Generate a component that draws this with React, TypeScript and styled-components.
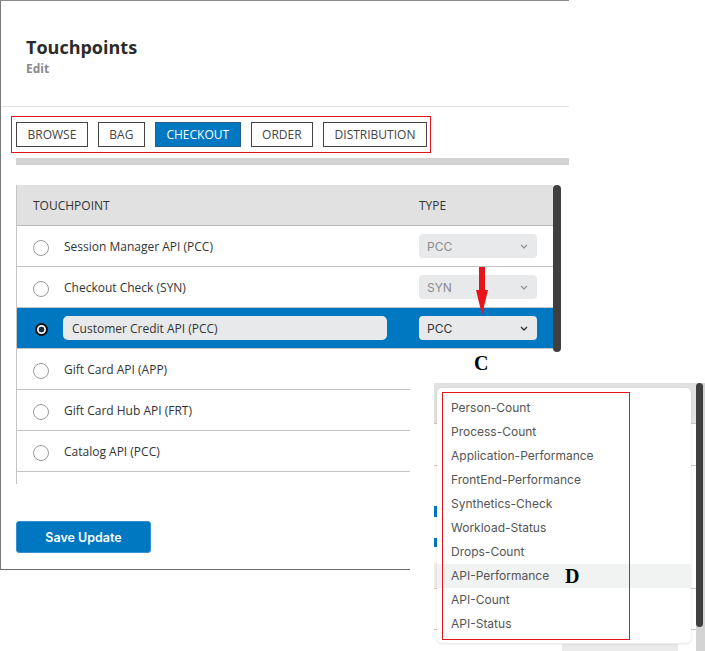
import React from 'react';
import styled, { createGlobalStyle } from 'styled-components';

const GlobalStyle = createGlobalStyle`
  html, body { margin: 0; padding: 0; background: #fff; }
  body { font-family: "Open Sans", "Liberation Sans", sans-serif; }
  * { box-sizing: border-box; }
`;

const Stage = styled.div`
  position: relative;
  width: 705px;
  height: 651px;
  overflow: hidden;
  background: #fff;
`;

const Modal = styled.section`
  width: 569px;
  display: flex;
  flex-direction: column;
  border-top: 1px solid #8c8c8c;
  border-left: 1px solid #7a7a7a;
  border-bottom: 1px solid #6a6a6a;
  padding-bottom: 16px;
`;

const Header = styled.header`
  height: 106px;
  padding: 34px 25px 0;
  border-bottom: 1px solid #e2e2e2;
`;

const Title = styled.h1`
  margin: 0;
  font-size: 18px;
  line-height: 24px;
  font-weight: 700;
  color: #2b2b2b;
`;

const Subtitle = styled.div`
  margin-top: 2px;
  font-size: 12px;
  line-height: 16px;
  font-weight: 700;
  color: #8a8a8a;
`;

const TabGroup = styled.nav`
  align-self: flex-start;
  display: flex;
  gap: 10px;
  margin: 9px 0 0 10px;
  padding: 5px 3px 5px 4px;
  border: 1px solid #e3151f;
`;

const Tab = styled.button<{ $active?: boolean }>`
  height: 25px;
  padding: 0 10.5px;
  border: 1px solid ${(p) => (p.$active ? '#2a5c85' : '#444')};
  background: ${(p) => (p.$active ? '#0077c1' : '#fff')};
  color: ${(p) => (p.$active ? '#fff' : '#444')};
  font-family: "Open Sans", "Liberation Sans", sans-serif;
  font-size: 12px;
  line-height: 23px;
  text-transform: uppercase;
  cursor: pointer;
`;

const GreyBar = styled.div`
  margin: 5px 0 0 15px;
  height: 7px;
  background: #d3d3d3;
`;

const TableFrame = styled.div`
  display: flex;
  margin: 20px 0 0 15px;
  height: 299px;
`;

const TableBox = styled.div`
  flex: 0 0 537px;
  border-left: 1px solid #c5c5c5;
  overflow: hidden;
`;

const ScrollTrack = styled.div`
  width: 8px;
`;

const ScrollThumb = styled.div<{ $h: number }>`
  height: ${(p) => p.$h}px;
  background: #3f3f3f;
  border-radius: 4px;
`;

const HeadRow = styled.div`
  display: flex;
  align-items: center;
  height: 41px;
  padding-left: 16px;
  background: #e1e1e1;
  border-bottom: 1px solid #b9b9b9;
  font-size: 12px;
  color: #333;
  text-transform: uppercase;
`;

const HeadName = styled.div`
  flex: 1;
`;

const HeadType = styled.div`
  width: 134px;
`;

const Row = styled.div<{ $selected?: boolean }>`
  display: flex;
  align-items: center;
  height: 41px;
  padding: 0 16px;
  border-bottom: 1px solid #c4c4c4;
  background: ${(p) => (p.$selected ? '#0077c1' : '#fff')};
`;

const Radio = styled.span<{ $checked?: boolean }>`
  flex: 0 0 auto;
  width: ${(p) => (p.$checked ? '13px' : '16px')};
  height: ${(p) => (p.$checked ? '13px' : '16px')};
  margin: 3px ${(p) => (p.$checked ? '15.5px' : '14px')} 0 ${(p) => (p.$checked ? '1.5px' : '0')};
  border-radius: 50%;
  border: ${(p) => (p.$checked ? '2px solid #111' : '1px solid #9a9a9a')};
  background: ${(p) =>
    p.$checked ? 'radial-gradient(circle, #132b45 0 2.6px, #fff 3.2px)' : '#fff'};
`;

const NameCell = styled.div<{ $editing?: boolean }>`
  width: 324px;
  height: 24px;
  display: flex;
  align-items: center;
  padding-left: ${(p) => (p.$editing ? '9px' : '1px')};
  border-radius: 5px;
  background: ${(p) => (p.$editing ? '#e8e9eb' : 'transparent')};
  font-size: 12px;
  color: #333;
  white-space: nowrap;
`;

const TypeSelect = styled.div<{ $disabled?: boolean }>`
  margin-left: auto;
  width: 118px;
  height: 24px;
  display: flex;
  align-items: center;
  justify-content: space-between;
  padding: 0 9px 0 8px;
  border-radius: 4px;
  background: #e8e9eb;
  font-family: Inter, "Liberation Sans", sans-serif;
  font-size: 12px;
  color: ${(p) => (p.$disabled ? '#8c8c8c' : '#333')};
`;

const SaveButton = styled.button`
  align-self: flex-start;
  margin: 37px 0 0 15px;
  width: 135px;
  height: 32px;
  border: 1px solid #3a8fd0;
  border-radius: 3px;
  background: #0077c1;
  color: #fff;
  font-family: Inter, "Liberation Sans", sans-serif;
  font-size: 12.5px;
  font-weight: 600;
  cursor: pointer;
`;

const Cover = styled.div`
  position: absolute;
  left: 410px;
  top: 352px;
  right: 0;
  bottom: 0;
  background: #fff;
`;

const Letter = styled.span<{ $x: number; $y: number }>`
  position: absolute;
  left: ${(p) => p.$x}px;
  top: ${(p) => p.$y}px;
  font-family: "Liberation Serif", serif;
  font-weight: 700;
  font-size: 20px;
  line-height: 20px;
  color: #000;
`;

const ArrowSvg = styled.svg`
  position: absolute;
  left: 475px;
  top: 267px;
`;

const Shot = styled.div`
  position: absolute;
  left: 434px;
  top: 383px;
  width: 271px;
  height: 268px;
  display: flex;
  align-items: flex-start;
  background:
    linear-gradient(#e2e2e2, #e2e2e2) 0 0 / 100% 40px no-repeat,
    linear-gradient(#c8c8c8, #c8c8c8) 0 40px / 100% 1px no-repeat,
    linear-gradient(#c8c8c8, #c8c8c8) 0 82px / 100% 1px no-repeat,
    linear-gradient(#0077c1, #0077c1) 0 123px / 3px 11px no-repeat,
    linear-gradient(#0077c1, #0077c1) 0 155px / 3px 9px no-repeat,
    linear-gradient(#efefef, #efefef) 0 180px / 3px 25px no-repeat,
    linear-gradient(#c8c8c8, #c8c8c8) 0 205px / 100% 1px no-repeat,
    linear-gradient(#c8c8c8, #c8c8c8) 0 246px / 100% 1px no-repeat,
    linear-gradient(#ebebeb, #ebebeb) 128px 261px / 116px 7px no-repeat,
    #fff;
`;

const Panel = styled.div`
  position: relative;
  margin: 5px 0 0 3px;
  width: 254px;
  padding: 8px 0 7px;
  background: #fff;
  border-radius: 5px;
  box-shadow: 0 1px 3px rgba(0, 0, 0, 0.12);
`;

const Option = styled.div<{ $hover?: boolean }>`
  height: 24px;
  line-height: 24px;
  padding-left: 14px;
  font-family: Inter, "Liberation Sans", sans-serif;
  font-size: 12px;
  color: #555;
  background: ${(p) => (p.$hover ? '#f1f2f2' : 'transparent')};
`;

const RedFrame = styled.div`
  position: absolute;
  left: 5px;
  top: 4px;
  width: 188px;
  height: 248px;
  border: 1px solid #e3151f;
  pointer-events: none;
`;

const ShotTrack = styled.div`
  margin-left: 5px;
  width: 9px;
  height: 268px;
  background: #d4d4d4;
`;

const ShotThumb = styled.div`
  width: 7px;
  height: 244px;
  background: #3f3f3f;
  border-radius: 4px;
`;

const Chevron = ({ dark }: { dark?: boolean }) => (
  <svg width="8" height="5" viewBox="0 0 8 5">
    <polyline
      points="1,1 4,4 7,1"
      fill="none"
      stroke={dark ? '#333' : '#8c8c8c'}
      strokeWidth={dark ? 1.4 : 1.1}
    />
  </svg>
);

const rows = [
  { name: 'Session Manager API (PCC)', type: 'PCC' },
  { name: 'Checkout Check (SYN)', type: 'SYN' },
  { name: 'Customer Credit API (PCC)', type: 'PCC', selected: true },
  { name: 'Gift Card API (APP)' },
  { name: 'Gift Card Hub API (FRT)' },
  { name: 'Catalog API (PCC)' },
  { name: '' },
];

const tabs = ['Browse', 'Bag', 'Checkout', 'Order', 'Distribution'];

const options = [
  'Person-Count',
  'Process-Count',
  'Application-Performance',
  'FrontEnd-Performance',
  'Synthetics-Check',
  'Workload-Status',
  'Drops-Count',
  'API-Performance',
  'API-Count',
  'API-Status',
];

export default function App() {
  return (
    <Stage>
      <GlobalStyle />
      <Modal>
        <Header>
          <Title>Touchpoints</Title>
          <Subtitle>Edit</Subtitle>
        </Header>
        <TabGroup>
          {tabs.map((t) => (
            <Tab key={t} $active={t === 'Checkout'}>
              {t}
            </Tab>
          ))}
        </TabGroup>
        <GreyBar />
        <TableFrame>
          <TableBox>
            <HeadRow>
              <HeadName>Touchpoint</HeadName>
              <HeadType>Type</HeadType>
            </HeadRow>
            {rows.map((r, i) => (
              <Row key={i} $selected={r.selected}>
                <Radio $checked={r.selected} />
                <NameCell $editing={r.selected}>{r.name}</NameCell>
                {r.type && (
                  <TypeSelect $disabled={!r.selected}>
                    <span>{r.type}</span>
                    <Chevron dark={r.selected} />
                  </TypeSelect>
                )}
              </Row>
            ))}
          </TableBox>
          <ScrollTrack>
            <ScrollThumb $h={167} />
          </ScrollTrack>
        </TableFrame>
        <SaveButton>Save Update</SaveButton>
      </Modal>

      <ArrowSvg width="15" height="49" viewBox="0 0 15 49">
        <rect x="4" y="0" width="6" height="25" fill="#e8141c" />
        <polygon points="1,23 13,23 7,48" fill="#e8141c" />
      </ArrowSvg>

      <Cover />
      <Letter $x={474} $y={353}>C</Letter>

      <Shot>
        <Panel>
          {options.map((o) => (
            <Option key={o} $hover={o === 'API-Performance'}>
              {o}
            </Option>
          ))}
          <RedFrame />
        </Panel>
        <ShotTrack>
          <ShotThumb />
        </ShotTrack>
      </Shot>
      <Letter $x={565} $y={566}>D</Letter>
    </Stage>
  );
}
